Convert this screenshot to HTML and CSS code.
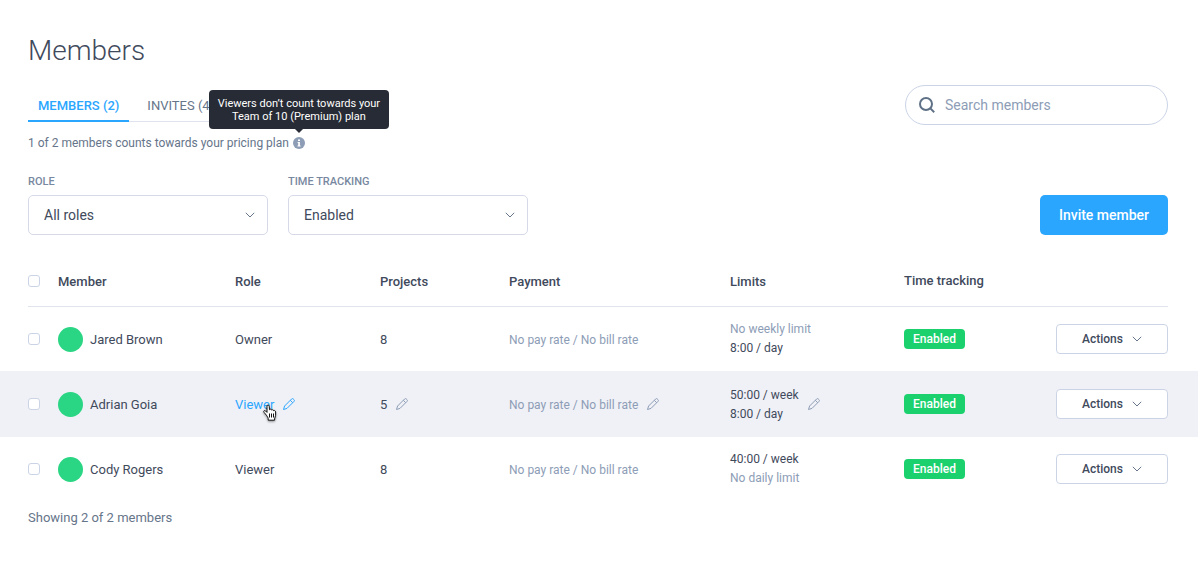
FILE: index.html
```html
<!DOCTYPE html>
<html lang="en">
<head>
<meta charset="utf-8">
<meta name="viewport" content="width=device-width, initial-scale=1">
<title>Members</title>
<link rel="stylesheet" href="styles.css">
</head>
<body>
<svg class="sprite" aria-hidden="true">
  <symbol id="pencil" viewBox="0 0 14 14">
    <path d="M1.500 12.500 2.600 9 9.600 2a1.200 1.200 0 0 1 1.700 0l.7.7a1.200 1.200 0 0 1 0 1.700L5 11.400zM8.300 3.300l2.400 2.400"/>
  </symbol>
  <symbol id="chevron" viewBox="0 0 10 6">
    <path d="M.8.8 5 5 9.200.8"/>
  </symbol>
</svg>
<main class="page">
  <h1 class="title">Members</h1>

  <div class="topbar">
    <nav class="tabs">
      <a class="tab tab-active" href="#members">MEMBERS (2)</a>
      <a class="tab" href="#invites">INVITES (4)</a>
    </nav>
    <label class="search">
      <svg class="search-icon" viewBox="0 0 18 18" aria-hidden="true"><circle cx="8" cy="8" r="6"/><path d="m12.4 12.4 3.8 3.8"/></svg>
      <input class="search-input" type="search" placeholder="Search members" aria-label="Search members">
    </label>
  </div>

  <p class="note">1 of 2 members counts towards your pricing plan
    <span class="info">
      <svg class="info-icon" viewBox="0 0 12 12" aria-hidden="true"><circle cx="6" cy="6" r="6" fill="#8d9db6"/><path d="M5 2.4h2v1.6H5zM4.6 5h2.3v3.4h.7v1H4.5v-1h.7V6h-.6z" fill="#fff"/></svg>
      <span class="tooltip" role="tooltip">Viewers don’t count towards your Team of 10 (Premium) plan</span>
    </span>
  </p>

  <div class="filters">
    <div class="field">
      <label class="field-label" for="role">ROLE</label>
      <div class="select-box">
        <select class="select" id="role"><option>All roles</option></select>
        <svg class="chevron select-chevron" aria-hidden="true"><use href="#chevron"/></svg>
      </div>
    </div>
    <div class="field">
      <label class="field-label" for="tracking">TIME TRACKING</label>
      <div class="select-box">
        <select class="select" id="tracking"><option>Enabled</option></select>
        <svg class="chevron select-chevron" aria-hidden="true"><use href="#chevron"/></svg>
      </div>
    </div>
    <button class="invite" type="button">Invite member</button>
  </div>

  <table class="members">
    <colgroup>
      <col class="col-check"><col class="col-member"><col class="col-role"><col class="col-projects"><col class="col-payment"><col class="col-limits"><col class="col-tracking"><col class="col-actions">
    </colgroup>
    <thead>
      <tr>
        <th><input class="check" type="checkbox" aria-label="Select all members"></th>
        <th class="text">Member</th><th class="text">Role</th><th class="text">Projects</th><th class="text">Payment</th><th class="text">Limits</th><th>Time tracking</th><th></th>
      </tr>
    </thead>
    <tbody>
      <tr>
        <td><input class="check" type="checkbox" aria-label="Select Jared Brown"></td>
        <td><div class="person"><span class="avatar"></span><span class="text">Jared Brown</span></div></td>
        <td class="text">Owner</td>
        <td class="text">8</td>
        <td class="text muted">No pay rate / No bill rate</td>
        <td><div class="limits"><span class="muted">No weekly limit</span><span>8:00 / day</span></div></td>
        <td><span class="badge">Enabled</span></td>
        <td><button class="actions" type="button">Actions<svg class="chevron" aria-hidden="true"><use href="#chevron"/></svg></button></td>
      </tr>
      <tr class="hovered">
        <td><input class="check" type="checkbox" aria-label="Select Adrian Goia"></td>
        <td><div class="person"><span class="avatar"></span><span class="text">Adrian Goia</span></div></td>
        <td>
          <div class="editable">
            <a class="role-link text" href="#role">Viewer
              <svg class="cursor" viewBox="0 0 16 18" aria-hidden="true"><path d="M4.4 11.2 2.1 8.4C1 7 2.5 5.9 3.7 7L5 8.4V2.2c0-1.6 2.1-1.6 2.2 0l.3 3.5c.5-.9 2-.7 2.1.4.6-.7 1.9-.4 2 .6.8-.5 2 0 2 1.2v3.4c0 1.5-1 2.2-1 3.6v1.3H6.2v-1.4c0-1.300-1-2.200-1.800-3.600z" fill="#fff" stroke="#111" stroke-linejoin="round"/><path d="M7.500 9.500v4M9.500 9.500v4M11.500 9.500v4" stroke="#111"/></svg>
            </a>
            <button class="edit edit-active" type="button" aria-label="Edit role"><svg class="pencil" aria-hidden="true"><use href="#pencil"/></svg></button>
          </div>
        </td>
        <td><div class="editable"><span class="text">5</span><button class="edit" type="button" aria-label="Edit projects"><svg class="pencil" aria-hidden="true"><use href="#pencil"/></svg></button></div></td>
        <td class="muted"><div class="editable"><span class="text">No pay rate / No bill rate</span><button class="edit" type="button" aria-label="Edit payment"><svg class="pencil" aria-hidden="true"><use href="#pencil"/></svg></button></div></td>
        <td><div class="editable"><div class="limits text"><span>50:00 / week</span><span>8:00 / day</span></div><button class="edit" type="button" aria-label="Edit limits"><svg class="pencil" aria-hidden="true"><use href="#pencil"/></svg></button></div></td>
        <td><span class="badge">Enabled</span></td>
        <td><button class="actions" type="button">Actions<svg class="chevron" aria-hidden="true"><use href="#chevron"/></svg></button></td>
      </tr>
      <tr>
        <td><input class="check" type="checkbox" aria-label="Select Cody Rogers"></td>
        <td><div class="person"><span class="avatar"></span><span class="text">Cody Rogers</span></div></td>
        <td class="text">Viewer</td>
        <td class="text">8</td>
        <td class="text muted">No pay rate / No bill rate</td>
        <td><div class="limits"><span>40:00 / week</span><span class="muted">No daily limit</span></div></td>
        <td><span class="badge">Enabled</span></td>
        <td><button class="actions" type="button">Actions<svg class="chevron" aria-hidden="true"><use href="#chevron"/></svg></button></td>
      </tr>
    </tbody>
  </table>
  <p class="summary">Showing 2 of 2 members</p>
</main>
</body>
</html>
```

FILE: styles.css
```css
* { box-sizing: border-box; }

body {
  margin: 0;
  background: #fff;
  color: #3f4a5c;
  font: 13px/20px Roboto, "Liberation Sans", sans-serif;
}

input, select, button { font: inherit; color: inherit; margin: 0; }

.sprite { position: absolute; width: 0; height: 0; }

.page { padding: 33px 30px 32px 28px; }

.title {
  margin: 0;
  font-size: 28px;
  font-weight: 300;
  line-height: 36px;
}

.topbar {
  display: flex;
  justify-content: space-between;
  align-items: flex-start;
  margin-top: 16px;
}

.tabs {
  display: flex;
  margin-top: 5px;
  border-bottom: 1px solid #dfe3ee;
}

.tab {
  height: 32px;
  margin-bottom: -1px;
  padding: 0 8px 0 18px;
  color: #66758a;
  line-height: 32px;
  text-decoration: none;
}

.tab-active {
  padding: 0 10px;
  border-bottom: 2px solid #2ba6ff;
  color: #2ba6ff;
  font-weight: 500;
}

.search {
  display: flex;
  align-items: center;
  gap: 9px;
  width: 263px;
  height: 40px;
  padding: 0 12px;
  border: 1px solid #cbd4e6;
  border-radius: 20px;
}

.search-icon {
  width: 18px;
  height: 18px;
  fill: none;
  stroke: #5f7186;
  stroke-width: 2;
}

.search-input {
  flex: 1;
  min-width: 0;
  padding: 0;
  border: 0;
  outline: 0;
  background: none;
  font-size: 14px;
}

.search-input::placeholder { color: #8d9db6; opacity: 1; }

.note {
  display: flex;
  align-items: center;
  gap: 4px;
  margin: 8px 0 0;
  color: #66758a;
  font-size: 12px;
}

.info { position: relative; display: flex; }
.info-icon { width: 12px; height: 12px; }

.tooltip {
  position: absolute;
  bottom: 20px;
  left: 50%;
  width: 180px;
  padding: 7px 8px 6px;
  border-radius: 4px;
  background: #272b35;
  color: #fff;
  font-size: 11px;
  line-height: 13px;
  text-align: center;
  transform: translateX(-50%);
}

.tooltip::after {
  content: "";
  position: absolute;
  top: 100%;
  left: 50%;
  margin-left: -4px;
  border: 4px solid transparent;
  border-top-color: #272b35;
  border-bottom: 0;
}

.filters {
  display: flex;
  align-items: flex-end;
  gap: 20px;
  margin-top: 21px;
}

.field { width: 240px; }

.field-label {
  display: block;
  margin-bottom: 5px;
  color: #7888a0;
  font-size: 11px;
  font-weight: 500;
  line-height: 16px;
}

.select-box { position: relative; }

.select {
  display: block;
  width: 100%;
  height: 40px;
  padding: 0 15px;
  border: 1px solid #d6d9e8;
  border-radius: 5px;
  background: #fff;
  font-size: 14px;
  appearance: none;
}

.chevron {
  width: 10px;
  height: 6px;
  fill: none;
  stroke: #66758a;
}

.select-chevron {
  position: absolute;
  top: 17px;
  right: 13px;
  pointer-events: none;
}

.invite {
  width: 128px;
  height: 40px;
  margin-left: auto;
  padding: 0;
  border: 0;
  border-radius: 5px;
  background: #2ba6ff;
  color: #fff;
  font-size: 14px;
  font-weight: 500;
}

.members {
  width: 100%;
  margin-top: 20px;
  border-collapse: separate;
  border-spacing: 0;
  table-layout: fixed;
}

.col-check { width: 30px; }
.col-member { width: 177px; }
.col-role { width: 145px; }
.col-projects { width: 129px; }
.col-limits { width: 174px; }
.col-tracking { width: 152px; }
.col-actions { width: 112px; }

.members th {
  height: 52px;
  padding: 0;
  border-bottom: 1px solid #dfe3ee;
  font-weight: 500;
  text-align: left;
}

.members td { height: 64px; padding: 0; }
.members .text { padding-top: 2px; }
.members .hovered td { height: 66px; }

.hovered {
  background: #f0f1f6;
  box-shadow: -28px 0 #f0f1f6, 30px 0 #f0f1f6;
}

.check {
  display: block;
  width: 12px;
  height: 12px;
  border: 1px solid #cbd4e6;
  border-radius: 3px;
  background: #fff;
  appearance: none;
}

.check:checked { background: #2ba6ff; }

.person { display: flex; align-items: center; gap: 7px; }

.avatar {
  width: 25px;
  height: 25px;
  border-radius: 50%;
  background: #2ad583;
}

.members .muted { color: #8d9db6; }
.members td.muted, .limits { font-size: 12px; }
.limits { display: flex; flex-direction: column; line-height: 19px; }

.editable { display: flex; align-items: center; gap: 8px; }

.role-link { position: relative; color: #2ba6ff; text-decoration: none; }

.edit {
  display: flex;
  padding: 0;
  border: 0;
  background: none;
  color: #8d9db6;
}

.edit-active { color: #2ba6ff; }

.pencil {
  width: 14px;
  height: 14px;
  fill: none;
  stroke: currentColor;
  stroke-linejoin: round;
}

.cursor {
  position: absolute;
  top: 11px;
  left: 27px;
  width: 16px;
  height: 18px;
  fill: none;
  filter: drop-shadow(0 1px 1px rgba(0, 0, 0, .4));
}

.badge {
  display: inline-block;
  padding: 0 9px;
  border-radius: 4px;
  background: #1bd16d;
  color: #fff;
  font-size: 12px;
  font-weight: 500;
  vertical-align: middle;
}

.actions {
  display: flex;
  align-items: center;
  justify-content: center;
  gap: 9px;
  width: 100%;
  height: 30px;
  padding: 0;
  border: 1px solid #cbd4e6;
  border-radius: 4px;
  background: #fff;
  font-size: 12px;
  font-weight: 500;
}

.summary { margin: 7px 0 0; color: #66758a; }
```
